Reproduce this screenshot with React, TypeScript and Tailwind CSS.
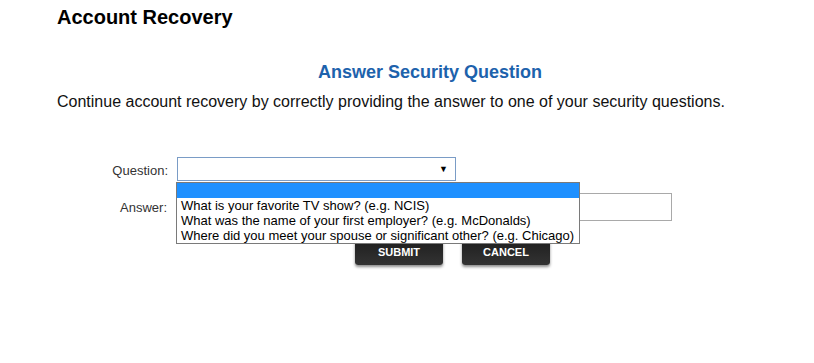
import React from "react";

const options = [
  "What is your favorite TV show? (e.g. NCIS)",
  "What was the name of your first employer? (e.g. McDonalds)",
  "Where did you meet your spouse or significant other? (e.g. Chicago)",
];

export default function App() {
  return (
    <div className="min-h-[363px] w-[814px] bg-white font-['Liberation_Sans',Arial,sans-serif] text-black">
      <div className="w-[803px] pl-[57px] pt-[5px]">
        <h1 className="text-[20px] font-bold leading-[24px]">Account Recovery</h1>

        <h2 className="mt-[32px] text-center text-[18px] font-bold leading-[22px] text-[#1d62ac]">
          Answer Security Question
        </h2>
        <p className="mt-[10px] text-[16px] leading-[18px] text-[#111]">
          Continue account recovery by correctly providing the answer to one of your security questions.
        </p>
      </div>

      {/* Form */}
      <div className="mt-[46px] flex flex-col">
        <div className="flex items-center">
          <label className="w-[169px] pr-[1px] pt-[4px] text-right text-[13px] text-[#333]">Question:</label>
          <div className="relative ml-[8px]">
            <div className="flex h-[24px] w-[279px] items-center justify-end border border-[#7a9cc6] bg-white pr-[7px]">
              <span className="text-[9px] leading-none text-black">▼</span>
            </div>
            {/* open dropdown list */}
            <div className="absolute left-[-1px] top-[25px] z-10 w-[404px] border border-[#7a7a7a] bg-white">
              <div className="h-[15px] bg-[#1e90ff]" />
              {options.map((o) => (
                <div key={o} className="h-[15px] whitespace-nowrap pl-[4px] text-[13px] leading-[15px] text-black">
                  {o}
                </div>
              ))}
            </div>
          </div>
        </div>

        <div className="mt-[12px] flex items-center">
          <label className="w-[168px] pr-[1px] pt-[1px] text-right text-[13px] text-[#333]">Answer:</label>
          <input className="ml-[9px] h-[28px] w-[495px] border border-[#a9a9a9] bg-white outline-none" />
        </div>

        <div className="ml-[355px] mt-[18px] flex gap-[19px]">
          <button className="h-[26px] w-[88px] rounded-[3px] bg-gradient-to-b from-[#1e1e1e] to-[#333] text-[11px] font-bold text-white shadow-[0_2px_3px_rgba(0,0,0,0.45)]">
            SUBMIT
          </button>
          <button className="h-[26px] w-[88px] rounded-[3px] bg-gradient-to-b from-[#1e1e1e] to-[#333] text-[11px] font-bold text-white shadow-[0_2px_3px_rgba(0,0,0,0.45)]">
            CANCEL
          </button>
        </div>
      </div>
    </div>
  );
}
